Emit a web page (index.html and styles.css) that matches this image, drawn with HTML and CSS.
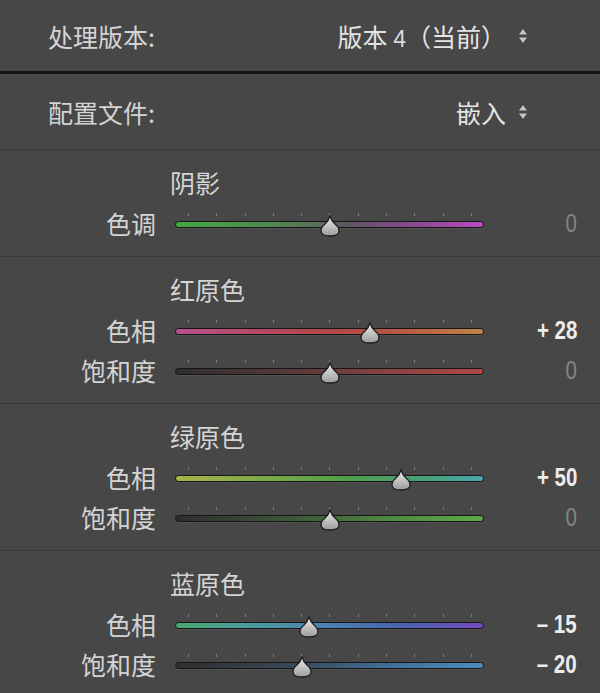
FILE: index.html
```html
<!DOCTYPE html>
<html lang="zh">
<head>
<meta charset="utf-8">
<title>Camera Calibration</title>
<link rel="stylesheet" href="styles.css">
</head>
<body>
<div class="panel">
  <div class="top-row first">
    <span class="top-label">处理版本:</span>
    <span class="select"><span class="sel-text">版本&nbsp;<span class="num">4</span>（当前）</span><svg class="updown" viewBox="0 0 10 18" width="10" height="18"><path d="M1 7.5 L5 2 L9 7.5 Z"/><path d="M1 10.5 L5 16 L9 10.5 Z"/></svg></span>
  </div>
  <div class="rule-heavy"></div>
  <div class="top-row second">
    <span class="top-label">配置文件:</span>
    <span class="select"><span class="sel-text">嵌入</span><svg class="updown" viewBox="0 0 10 18" width="10" height="18"><path d="M1 7.5 L5 2 L9 7.5 Z"/><path d="M1 10.5 L5 16 L9 10.5 Z"/></svg></span>
  </div>
  <div class="sep"></div>

  <section class="group">
    <div class="gtitle">阴影</div>
    <div class="srow">
      <span class="slabel">色调</span>
      <div class="slider">
        <div class="ticks"><i></i><i></i><i></i><i></i><i></i><i></i><i></i><i></i><i></i><i></i><i></i></div>
        <div class="track tint"></div>
        <svg class="thumb" style="--v:0" viewBox="0 0 22 22" width="22" height="22"><defs><linearGradient id="tg" x1="0" y1="0" x2="0" y2="1"><stop offset="0" stop-color="#ececec"/><stop offset="1" stop-color="#9c9c9c"/></linearGradient></defs><path d="M11 1 Q12.5 6 16 9 Q20 12 20 16 Q20 21 11 21 Q2 21 2 16 Q2 12 6 9 Q9.5 6 11 1 Z" fill="url(#tg)" stroke="#1c1c1c" stroke-width="1.3"/></svg>
      </div>
      <span class="val zero"><span>0</span></span>
    </div>
  </section>
  <div class="sep"></div>

  <section class="group">
    <div class="gtitle">红原色</div>
    <div class="srow">
      <span class="slabel">色相</span>
      <div class="slider">
        <div class="ticks"><i></i><i></i><i></i><i></i><i></i><i></i><i></i><i></i><i></i><i></i><i></i></div>
        <div class="track red-hue"></div>
        <svg class="thumb" style="--v:28" viewBox="0 0 22 22" width="22" height="22"><path d="M11 1 Q12.5 6 16 9 Q20 12 20 16 Q20 21 11 21 Q2 21 2 16 Q2 12 6 9 Q9.5 6 11 1 Z" fill="url(#tg)" stroke="#1c1c1c" stroke-width="1.3"/></svg>
      </div>
      <span class="val"><span>+ 28</span></span>
    </div>
    <div class="srow">
      <span class="slabel">饱和度</span>
      <div class="slider">
        <div class="ticks"><i></i><i></i><i></i><i></i><i></i><i></i><i></i><i></i><i></i><i></i><i></i></div>
        <div class="track red-sat"></div>
        <svg class="thumb" style="--v:0" viewBox="0 0 22 22" width="22" height="22"><path d="M11 1 Q12.5 6 16 9 Q20 12 20 16 Q20 21 11 21 Q2 21 2 16 Q2 12 6 9 Q9.5 6 11 1 Z" fill="url(#tg)" stroke="#1c1c1c" stroke-width="1.3"/></svg>
      </div>
      <span class="val zero"><span>0</span></span>
    </div>
  </section>
  <div class="sep"></div>

  <section class="group">
    <div class="gtitle">绿原色</div>
    <div class="srow">
      <span class="slabel">色相</span>
      <div class="slider">
        <div class="ticks"><i></i><i></i><i></i><i></i><i></i><i></i><i></i><i></i><i></i><i></i><i></i></div>
        <div class="track green-hue"></div>
        <svg class="thumb" style="--v:50" viewBox="0 0 22 22" width="22" height="22"><path d="M11 1 Q12.5 6 16 9 Q20 12 20 16 Q20 21 11 21 Q2 21 2 16 Q2 12 6 9 Q9.5 6 11 1 Z" fill="url(#tg)" stroke="#1c1c1c" stroke-width="1.3"/></svg>
      </div>
      <span class="val"><span>+ 50</span></span>
    </div>
    <div class="srow">
      <span class="slabel">饱和度</span>
      <div class="slider">
        <div class="ticks"><i></i><i></i><i></i><i></i><i></i><i></i><i></i><i></i><i></i><i></i><i></i></div>
        <div class="track green-sat"></div>
        <svg class="thumb" style="--v:0" viewBox="0 0 22 22" width="22" height="22"><path d="M11 1 Q12.5 6 16 9 Q20 12 20 16 Q20 21 11 21 Q2 21 2 16 Q2 12 6 9 Q9.5 6 11 1 Z" fill="url(#tg)" stroke="#1c1c1c" stroke-width="1.3"/></svg>
      </div>
      <span class="val zero"><span>0</span></span>
    </div>
  </section>
  <div class="sep"></div>

  <section class="group">
    <div class="gtitle">蓝原色</div>
    <div class="srow">
      <span class="slabel">色相</span>
      <div class="slider">
        <div class="ticks"><i></i><i></i><i></i><i></i><i></i><i></i><i></i><i></i><i></i><i></i><i></i></div>
        <div class="track blue-hue"></div>
        <svg class="thumb" style="--v:-15" viewBox="0 0 22 22" width="22" height="22"><path d="M11 1 Q12.5 6 16 9 Q20 12 20 16 Q20 21 11 21 Q2 21 2 16 Q2 12 6 9 Q9.5 6 11 1 Z" fill="url(#tg)" stroke="#1c1c1c" stroke-width="1.3"/></svg>
      </div>
      <span class="val"><span>– 15</span></span>
    </div>
    <div class="srow">
      <span class="slabel">饱和度</span>
      <div class="slider">
        <div class="ticks"><i></i><i></i><i></i><i></i><i></i><i></i><i></i><i></i><i></i><i></i><i></i></div>
        <div class="track blue-sat"></div>
        <svg class="thumb" style="--v:-20" viewBox="0 0 22 22" width="22" height="22"><path d="M11 1 Q12.5 6 16 9 Q20 12 20 16 Q20 21 11 21 Q2 21 2 16 Q2 12 6 9 Q9.5 6 11 1 Z" fill="url(#tg)" stroke="#1c1c1c" stroke-width="1.3"/></svg>
      </div>
      <span class="val"><span>– 20</span></span>
    </div>
  </section>
</div>
</body>
</html>
```

FILE: styles.css
```css
html, body {
  margin: 0;
  padding: 0;
  background: #474747;
}
body {
  width: 600px;
  height: 693px;
  overflow: hidden;
  font-family: "Noto Sans CJK SC", "Noto Sans", sans-serif;
  color: #d0d0d0;
}
.panel {
  display: flex;
  flex-direction: column;
}
.top-row {
  display: flex;
  align-items: center;
  justify-content: space-between;
  padding: 0 72px 0 48px;
  font-size: 25px;
  color: #d4d4d4;
}
.top-row.first { height: 71px; }
.top-row.second { height: 75px; }
.select {
  display: flex;
  align-items: center;
  color: #e4e4e4;
}
.num {
  font-family: "Liberation Sans", sans-serif;
  font-size: 23px;
  color: #d6dbe2;
}
.updown {
  margin-left: 12px;
  fill: #c4c4c4;
}
.rule-heavy {
  height: 3px;
  background: #141414;
}
.sep {
  height: 1px;
  background: #3a3a3a;
}
.group {
  padding: 14px 0 13px;
}
.gtitle {
  height: 36px;
  line-height: 36px;
  padding-left: 170px;
  margin-bottom: 3px;
  font-size: 25px;
  color: #d4d4d4;
}
.srow {
  display: grid;
  grid-template-columns: 156px 309px 1fr;
  column-gap: 19px;
  align-items: center;
  height: 40px;
  padding-right: 23px;
}
.slabel {
  text-align: right;
  font-size: 25px;
  color: #d4d4d4;
  line-height: 40px;
}
.slider {
  position: relative;
  height: 40px;
  padding-top: 10px;
  box-sizing: border-box;
}
.ticks {
  display: flex;
  justify-content: space-between;
  margin: 0 12px 0 13px;
  height: 3px;
}
.ticks i {
  display: block;
  width: 1px;
  height: 3px;
  background: #7c7c7c;
}
.track {
  margin-top: 5px;
  height: 5px;
  border: 1px solid #161616;
  border-radius: 4px;
  box-shadow: 0 1px 0 rgba(255,255,255,0.06);
}
.tint { background: linear-gradient(90deg, #44a844, #4f8a4f 30%, #5b6a5b 48%, #5e5560 55%, #8a4a90 78%, #b84cc0); }
.red-hue { background: linear-gradient(90deg, #b8508e, #b44a66 25%, #b04848 50%, #b85c44 75%, #c08448); }
.red-sat { background: linear-gradient(90deg, #2e2e2e, #5a3a3a 40%, #8a4242 70%, #b04848); }
.green-hue { background: linear-gradient(90deg, #a8b448, #7aaa48 30%, #50a048 55%, #48a07a 80%, #48a8ac); }
.green-sat { background: linear-gradient(90deg, #2e2e2e, #3e5a3a 40%, #4e8a42 70%, #60aa48); }
.blue-hue { background: linear-gradient(90deg, #48a870, #4a9aa0 25%, #4a80b0 50%, #4a62b0 75%, #7448bc); }
.blue-sat { background: linear-gradient(90deg, #2e2e2e, #3a4a5a 40%, #42709a 70%, #4a8cbc); }
.thumb {
  position: absolute;
  top: 12px;
  left: calc(13px + (var(--v) + 100) / 200 * 284px - 11px);
}
.val {
  text-align: right;
  font-family: "Liberation Sans", sans-serif;
  font-size: 25px;
  font-weight: bold;
  color: #ececec;
}
.val span {
  display: inline-block;
  transform: scaleX(0.82);
  transform-origin: right center;
}
.val.zero {
  font-weight: normal;
  color: #858585;
}
```
